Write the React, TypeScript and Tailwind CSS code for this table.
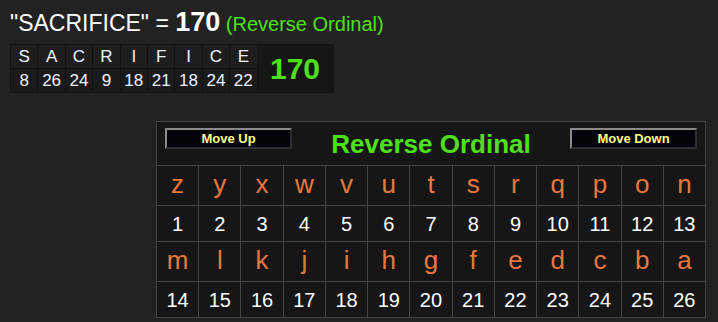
import React from "react";

const word = "SACRIFICE".split("");
const wordVals = [8, 26, 24, 9, 18, 21, 18, 24, 22];
const row1 = "zyxwvutsrqpon".split("");
const row2 = "mlkjihgfedcba".split("");

const font = { fontFamily: '"Liberation Sans", Arial, sans-serif' };

function LetterRow({ letters }: { letters: string[] }) {
  return (
    <>
      {letters.map((l, i) => (
        <div
          key={"l" + i + l}
          className="bg-[#161616] h-[39px] flex items-center justify-center text-[26px] leading-none text-[#e8773e]"
        >
          <span className="-mt-[4px]">{l}</span>
        </div>
      ))}
    </>
  );
}

function NumRow({ start }: { start: number }) {
  return (
    <>
      {Array.from({ length: 13 }, (_, i) => (
        <div
          key={"n" + (start + i)}
          className="bg-[#161616] h-[35px] flex items-center justify-center text-[20px] leading-none text-white"
        >
          {start + i}
        </div>
      ))}
    </>
  );
}

function Btn({ label }: { label: string }) {
  return (
    <div className="w-[127px] h-[21px] bg-[#03030a] border-2 border-t-[#8a8a8a] border-l-[#8a8a8a] border-b-[#2e2e2e] border-r-[#2e2e2e] flex items-center justify-center text-[13px] font-bold leading-none text-[#ffff8a]">
      {label}
    </div>
  );
}

export default function App() {
  return (
    <div className="w-[718px] h-[322px] bg-[#222222] overflow-hidden" style={font}>
      <div className="pl-[10px] pt-[8px] h-[36px] flex items-baseline whitespace-nowrap">
        <span className="text-[23px] text-white leading-[28px]">"SACRIFICE" =&nbsp;</span>
        <span className="text-[27px] font-bold text-white leading-[28px]">170</span>
        <span className="text-[20px] text-[#4fe01c] leading-[28px]">&nbsp;(Reverse Ordinal)</span>
      </div>
      <div className="ml-[10px] mt-[8px] w-fit bg-[#121212] p-px grid grid-cols-[repeat(9,26.4px)_75px] grid-rows-[23px_23px] gap-px">
        {word.map((c, i) => (
          <div
            key={"w" + i}
            className="bg-[#1e1e1e] flex items-center justify-center text-[17px] leading-none text-[#eef4ff]"
            style={{ gridColumn: i + 1, gridRow: 1 }}
          >
            {c}
          </div>
        ))}
        {wordVals.map((v, i) => (
          <div
            key={"v" + i}
            className="bg-[#1a1a1a] flex items-center justify-center text-[17px] leading-none text-[#eef4ff]"
            style={{ gridColumn: i + 1, gridRow: 2 }}
          >
            {v}
          </div>
        ))}
        <div className="col-start-10 row-start-1 row-span-2 bg-[#161616] flex items-center justify-center text-[30px] font-bold leading-none text-[#4fe01c]">
          170
        </div>
      </div>
      <div className="ml-[156px] mt-[28px] w-[550px] bg-[#434343] p-px grid grid-cols-13 gap-px">
        <div className="col-span-13 h-[43px] bg-[#161616] flex items-start justify-between px-[8px]">
          <div className="mt-[6px]">
            <Btn label="Move Up" />
          </div>
          <div className="h-full flex items-center text-[26px] font-bold leading-none text-[#4fe01c]">
            Reverse Ordinal
          </div>
          <div className="mt-[6px]">
            <Btn label="Move Down" />
          </div>
        </div>
        <LetterRow letters={row1} />
        <NumRow start={1} />
        <LetterRow letters={row2} />
        <NumRow start={14} />
      </div>
    </div>
  );
}
